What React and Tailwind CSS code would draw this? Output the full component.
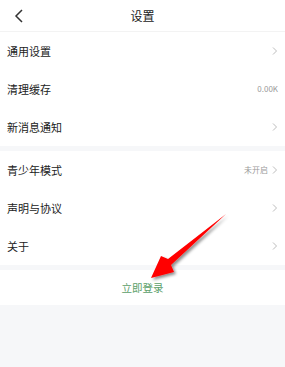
import React from 'react';

const Chevron = () => (
    <svg width="6" height="10" viewBox="0 0 6 10" className="shrink-0">
        <path d="M1 1.5l3.5 3.5-3.5 3.5" fill="none" stroke="#bdbdbd" strokeWidth="1" />
    </svg>
);

const Row = ({ label, value, arrow = true }) => (
    <div className="h-[38px] flex items-center justify-between pl-[7px] pr-[7px] bg-white">
        <span className="text-[11px] text-[#222]">{label}</span>
        <div className="flex items-center gap-[4px]">
            {value && <span className="text-[8px] text-[#9a9a9a]">{value}</span>}
            {arrow && <Chevron />}
        </div>
    </div>
);

const App = () => {
    return (
        <div
            className="relative w-[285px] h-[367px] bg-[#f6f7f9] overflow-hidden"
            style={{ fontFamily: '"Noto Sans CJK SC", "Noto Sans", sans-serif' }}
        >
            <div className="h-[32px] bg-white flex items-center justify-center relative border-b border-[#f3f3f3]">
                <svg width="10" height="14" viewBox="0 0 10 14" className="absolute left-[14px] top-[9px]">
                    <path d="M8 1L2 7l6 6" fill="none" stroke="#333" strokeWidth="1.5" />
                </svg>
                <span className="text-[12px] text-[#222]">设置</span>
            </div>

            <div>
                <Row label="通用设置" />
                <Row label="清理缓存" value="0.00K" arrow={false} />
                <Row label="新消息通知" />
            </div>

            <div className="mt-[5px]">
                <Row label="青少年模式" value="未开启" />
                <Row label="声明与协议" />
                <Row label="关于" />
            </div>

            <div className="mt-[5px] h-[35px] bg-white flex items-center justify-center">
                <span className="text-[10.5px] text-[#5a9e68]">立即登录</span>
            </div>

            {/* annotation arrow */}
            <svg width="285" height="367" className="absolute left-0 top-0 pointer-events-none">
                <defs>
                    <filter id="sh" x="-20%" y="-20%" width="140%" height="140%">
                        <feDropShadow dx="2" dy="2" stdDeviation="1.5" floodColor="#000" floodOpacity="0.45" />
                    </filter>
                </defs>
                <polygon
                    points="226,214 168,259 161,256 151,278 174,272 171,265"
                    fill="#ff0000"
                    filter="url(#sh)"
                />
            </svg>
        </div>
    );
};

export default App;
